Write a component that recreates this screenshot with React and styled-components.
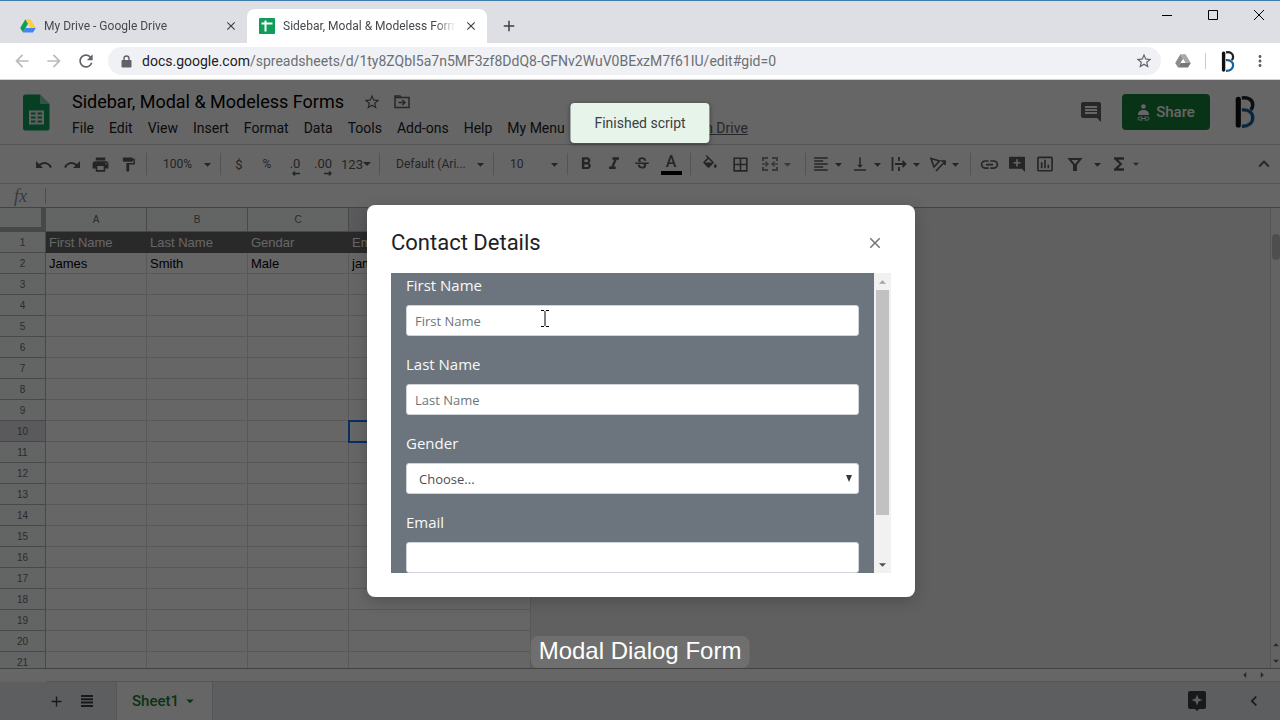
import React, { useState } from 'react'
import styled, { createGlobalStyle } from 'styled-components'
import {
  MdPrint,
  MdFormatPaint,
  MdFormatBold,
  MdFormatItalic,
  MdStrikethroughS,
  MdBorderAll,
  MdFormatAlignLeft,
  MdVerticalAlignBottom,
  MdInsertLink,
  MdFunctions,
  MdKeyboardArrowUp,
  MdKeyboardArrowLeft,
  MdArrowDropDown,
  MdArrowDropUp,
  MdArrowLeft,
  MdArrowRight,
  MdArrowBack,
  MdArrowForward,
  MdRefresh,
  MdStarBorder,
  MdMoreVert,
  MdAdd,
  MdClose,
  MdInsertChartOutlined,
} from 'react-icons/md'

const ui = "'Open Sans', 'Noto Sans', sans-serif"
const roboto = "Roboto, 'Liberation Sans', sans-serif"
const arial = "'Liberation Sans', Arial, sans-serif"

const GlobalStyle = createGlobalStyle`
  * {
    box-sizing: border-box;
  }
  body {
    margin: 0;
    overflow: hidden;
    font-family: ${roboto};
  }
  button, input, select {
    margin: 0;
    padding: 0;
    border: 0;
    background: none;
    font: inherit;
    color: inherit;
  }
  svg {
    display: block;
    flex-shrink: 0;
  }
`

const Browser = styled.div`
  display: flex;
  flex-direction: column;
  height: 100vh;
  background-color: white;
`

/* browser frame */
const TabStrip = styled.div`
  display: flex;
  height: 43px;
  border-top: 1px solid #3f7cab;
  background-color: #dddfe5;
  font-size: 12px;
  color: #45494d;
`
const Tab = styled.div`
  display: flex;
  align-items: center;
  gap: 8px;
  width: ${(props) => (props.$active ? '240px' : '247px')};
  margin-top: 8px;
  padding: 0 9px 0 ${(props) => (props.$active ? '12px' : '20px')};
  border-radius: 8px 8px 0 0;
  background-color: ${(props) => (props.$active ? 'white' : 'transparent')};
`
const TabTitle = styled.span`
  flex: 1;
  overflow: hidden;
  white-space: nowrap;
  mask-image: linear-gradient(to right, black 88%, transparent);
`
const IconButton = styled.button`
  display: flex;
  align-items: center;
  justify-content: center;
  width: ${(props) => props.$w || 28}px;
  height: 28px;
  color: ${(props) => props.$color || 'inherit'};
`
const TabClose = styled.button`
  display: flex;
  color: #3c4043;
`
const NewTab = styled(IconButton)`
  align-self: center;
  margin: 8px 0 0 8px;
`
const WindowButtons = styled.div`
  display: flex;
  margin: 0 -2px 0 auto;
`
const NavBar = styled.div`
  display: flex;
  align-items: center;
  height: 37px;
  padding: 0 2px 0 6px;
  border-bottom: 1px solid #d0d2d4;
  color: #5f6368;
`
const NavButtons = styled.div`
  display: flex;
  gap: 4px;
  margin: 0 8px 0 2px;
`
const Omnibox = styled.div`
  flex: 1;
  display: flex;
  align-items: center;
  gap: 9px;
  height: 28px;
  padding: 0 8px 0 12px;
  border-radius: 14px;
  background-color: #f0f1f4;
  font-size: 14px;
`
const Url = styled.span`
  flex: 1;
  white-space: nowrap;
  color: #6b6f74;
  b {
    font-weight: 400;
    color: #202124;
  }
`
const Extensions = styled.div`
  display: flex;
  align-items: center;
  margin-left: 8px;
`
const NavDivider = styled.i`
  width: 1px;
  height: 16px;
  margin: 0 8px;
  background-color: #c8cacd;
`

/* spreadsheet */
const Sheets = styled.main`
  flex: 1;
  display: flex;
  flex-direction: column;
  min-height: 0;
  position: relative;
  color: #202124;
`
const Header = styled.header`
  display: flex;
  align-items: center;
  height: 64px;
  padding: 0 24px 0 23px;
`
const HeaderText = styled.div`
  flex: 1;
  margin-left: 22px;
  padding-top: 5px;
`
const TitleRow = styled.div`
  display: flex;
  align-items: center;
  gap: 13px;
  height: 26px;
  color: #5f6368;
`
const DocTitle = styled.h1`
  margin: 0 6px 0 0;
  font-size: 18px;
  font-weight: 400;
  color: black;
`
const MenuRow = styled.nav`
  display: flex;
  align-items: center;
  gap: 15px;
  height: 26px;
  font-size: 14px;
  white-space: nowrap;
  a {
    margin-left: 6px;
    color: #5f6368;
  }
`
const ShareButton = styled.button`
  display: flex;
  align-items: center;
  justify-content: center;
  gap: 6px;
  width: 88px;
  height: 36px;
  margin: 0 24px 0 17px;
  border-radius: 4px;
  background-color: #188038;
  color: white;
  font-size: 15px;
  font-weight: 500;
`
const Toolbar = styled.div`
  display: flex;
  align-items: center;
  height: 40px;
  padding: 0 2px 0 30px;
  border-top: 1px solid #d0d2d5;
  border-bottom: 1px solid #d0d2d5;
  color: #5a5d61;
  font-size: 13px;
`
const Separator = styled.i`
  width: 1px;
  height: 22px;
  margin: 0 4px;
  background-color: #cfd1d4;
`
const Picker = styled.label`
  display: flex;
  align-items: center;
  width: ${(props) => props.$w}px;
  padding-left: 12px;
  font-size: 12px;
  select {
    flex: 1;
    min-width: 0;
    appearance: none;
  }
`
const MenuButton = styled.button`
  display: flex;
  align-items: center;
  justify-content: center;
  width: 39px;
  height: 28px;
`
const FilterButton = styled(MenuButton)`
  gap: 6px;
  width: 48px;
  padding-left: 6px;
`
const Decimal = styled.span`
  display: flex;
  flex-direction: column;
  align-items: flex-end;
  padding-top: 4px;
  font-size: 13px;
  line-height: 14px;
`
const Percent = styled.span`
  font-size: 12px;
`
const TextColor = styled.span`
  width: 21px;
  border-bottom: 4px solid black;
  font-size: 16px;
  line-height: 18px;
  font-weight: 500;
`
const Collapse = styled.div`
  margin-left: auto;
`
const FormulaBar = styled.label`
  display: flex;
  align-items: center;
  height: 23px;
  span {
    width: 46px;
    padding-left: 14px;
    border-right: 1px solid #c0c0c0;
    font-family: 'Liberation Serif', serif;
    font-style: italic;
    font-size: 18px;
    line-height: 16px;
    color: #8f9194;
  }
  input {
    flex: 1;
  }
`
const GridArea = styled.div`
  flex: 1;
  display: flex;
  min-height: 0;
  overflow: hidden;
  border-top: 1px solid #a8a8a8;
  border-bottom: 1px solid #a8a8a8;
  background-color: #efefef;
`
const Grid = styled.table`
  table-layout: fixed;
  width: 531px;
  border-collapse: separate;
  border-spacing: 0;
  font-family: ${arial};
  font-size: 13px;
`
const Corner = styled.th`
  width: 46px;
  height: 24px;
  border-right: 5px solid #b4b4b4;
  border-bottom: 5px solid #b4b4b4;
  background-color: #f8f9fa;
`
const ColumnHead = styled.th`
  width: ${(props) => props.$w}px;
  padding: 0;
  border-right: 1px solid #b4b4b4;
  border-bottom: 1px solid #b4b4b4;
  background-color: ${(props) => (props.$active ? '#e0e2e6' : '#f8f9fa')};
  color: #6a6d70;
  font-size: 10px;
  font-weight: 400;
`
const RowHead = styled(ColumnHead)`
  height: 21px;
`
const Cell = styled.td`
  height: 21px;
  padding: 0 3px;
  overflow: hidden;
  white-space: nowrap;
  border-right: 1px solid ${(props) => (props.$head ? '#666666' : '#dcdcdc')};
  border-bottom: 1px solid ${(props) => (props.$head ? '#666666' : '#dcdcdc')};
  background-color: ${(props) => (props.$head ? '#666666' : 'white')};
  color: ${(props) => (props.$head ? 'white' : 'black')};
  outline: ${(props) => (props.$active ? '2px solid #1a73e8' : 'none')};
  outline-offset: -1px;
`
const VerticalTrack = styled.div`
  display: flex;
  flex-direction: column;
  align-items: center;
  gap: 2px;
  width: 10px;
  margin-left: auto;
  padding: 26px 0 0 1px;
  border-left: 1px solid #d0d0d0;
  background-color: #f8f8f8;
  color: #666666;
`
const VerticalThumb = styled.i`
  width: 8px;
  height: 26px;
  margin-bottom: auto;
  border-radius: 4px;
  background-color: #c4c4c4;
`
const HorizontalTrack = styled.div`
  display: flex;
  align-items: center;
  justify-content: flex-end;
  gap: 3px;
  height: 13px;
  margin-left: 46px;
  padding-right: 11px;
  border-bottom: 1px solid #d8d8d8;
  color: #666666;
`
const Footer = styled.footer`
  display: flex;
  align-items: center;
  height: 38px;
  padding: 0 12px 0 42px;
  background-color: #e8eaee;
  color: #3c4043;
`
const SheetTab = styled.button`
  display: flex;
  align-items: center;
  justify-content: center;
  gap: 2px;
  align-self: stretch;
  width: 97px;
  margin: 0 auto 0 12px;
  padding-left: 2px;
  border: solid #d8d8d8;
  border-width: 0 1px;
  background-color: white;
  color: #188038;
  font-size: 15px;
  font-weight: 500;
`
const FooterTools = styled.div`
  display: flex;
  gap: 29px;
`

/* things above the sheet */
const Overlay = styled.div`
  position: absolute;
  inset: 0;
  display: flex;
  align-items: center;
  justify-content: center;
  padding: 2px 0 0 2px;
  background-color: rgba(0, 0, 0, 0.6);
`
const Toast = styled.div`
  position: absolute;
  top: 23px;
  left: 50%;
  transform: translateX(-50%);
  padding: 0 24px;
  border-radius: 4px;
  background-color: #e6f4ea;
  box-shadow: 0 1px 4px rgba(0, 0, 0, 0.4);
  color: #3c4043;
  font-size: 14px;
  line-height: 40px;
`
const Dialog = styled.section`
  width: 548px;
  padding: 24px;
  border-radius: 8px;
  background-color: white;
  box-shadow: 0 4px 16px rgba(0, 0, 0, 0.2);
`
const DialogHeader = styled.div`
  display: flex;
  align-items: center;
  justify-content: space-between;
  height: 28px;
  margin-bottom: 16px;
  padding-right: 7px;
  h2 {
    margin: 0;
    font-size: 22px;
    line-height: 26px;
    font-weight: 400;
    color: #202124;
  }
  button {
    color: #757575;
  }
`
const DialogBody = styled.div`
  display: flex;
  height: 300px;
`
const Form = styled.form`
  flex: 1;
  overflow: hidden;
  padding: 0 15px;
  background-color: #6c757d;
  font-family: ${ui};
`
const Group = styled.div`
  margin-bottom: 16px;
  label {
    display: block;
    margin-bottom: 8px;
    font-size: 15px;
    line-height: 24px;
    font-weight: 500;
    color: #f8f9fa;
  }
`
const TextInput = styled.input`
  display: block;
  width: 100%;
  height: 31px;
  padding: 0 8px;
  border: 1px solid #ced4da;
  border-radius: 3px;
  background-color: white;
  color: #495057;
  font-size: 13px;
  &::placeholder {
    color: #6c757d;
    opacity: 1;
  }
`
const SelectBox = styled.div`
  display: flex;
  align-items: center;
  height: 31px;
  padding-right: 5px;
  border: 1px solid #ced4da;
  border-radius: 3px;
  background-color: white;
  color: #495057;
  font-size: 13px;
  select {
    flex: 1;
    height: 29px;
    padding-left: 12px;
    appearance: none;
  }
`
const Scrollbar = styled.div`
  display: flex;
  flex-direction: column;
  align-items: center;
  width: 17px;
  background-color: #f1f1f1;
`
const ScrollArrow = styled.button`
  display: flex;
  align-items: center;
  justify-content: center;
  width: 17px;
  height: 17px;
  color: ${(props) => (props.$dim ? '#a3a3a3' : '#505050')};
`
const ScrollThumb = styled.i`
  width: 13px;
  height: 225px;
  margin-bottom: auto;
  background-color: #c1c1c1;
`
const Caption = styled.div`
  position: absolute;
  bottom: 52px;
  left: 50%;
  transform: translateX(-50%);
  height: 32px;
  padding: 0 8px;
  border-radius: 8px;
  background-color: #6f6f6f;
  color: white;
  font-family: ${arial};
  font-size: 24px;
  line-height: 29px;
  white-space: nowrap;
`
const Pointer = styled.svg`
  position: absolute;
  top: 230px;
  left: 541px;
`

const DriveIcon = ({ grey }) => (
  <svg width="16" height="16" viewBox="0 0 16 16">
    <path d="M5.4 1.2 0.2 10 3 14.6 8 5.8z" fill={grey ? '#8c8c8c' : '#0f9d58'} />
    <path d="M5.4 1.2h5.2L15.8 10h-5.2z" fill={grey ? '#a8a8a8' : '#ffcd40'} />
    <path d="M3 14.6 5.6 10h10.2L13 14.6z" fill={grey ? '#777777' : '#4285f4'} />
  </svg>
)

const SheetFavicon = () => (
  <svg width="16" height="16" viewBox="0 0 16 16">
    <rect width="16" height="16" rx="1" fill="#0f9d58" />
    <path d="M2.5 5.5h11M6.5 2.5v11" stroke="white" strokeWidth="2" />
  </svg>
)

const LockIcon = () => (
  <svg width="13" height="13" viewBox="0 0 13 13">
    <path d="M2.5 5h8a1 1 0 0 1 1 1v5.500a1 1 0 0 1-1 1h-8a1 1 0 0 1-1-1V6a1 1 0 0 1 1-1z" fill="currentColor" />
    <path d="M4 5.500V3.500a2.500 2.500 0 0 1 5 0v2" fill="none" stroke="currentColor" strokeWidth="1.400" />
  </svg>
)

const SheetsLogo = () => (
  <svg width="27" height="37" viewBox="0 0 27 37">
    <path d="M2.5 .5H17L26.5 10v24a2.5 2.5 0 0 1-2.5 2.5H2.5A2.5 2.5 0 0 1 0 34V3A2.5 2.5 0 0 1 2.5 .5z" fill="#0f9d58" />
    <path d="M17 .5 26.5 10H17z" fill="#87ceac" />
    <path d="M6 16.5h15v14H6zM8 18.5v2h4.5v-2zm6.5 0v2H19v-2zM8 22.5v2h4.5v-2zm6.5 0v2H19v-2zM8 26.5v2h4.5v-2zm6.5 0v2H19v-2z" fill="#f1f1f1" fillRule="evenodd" />
  </svg>
)

const BrandLogo = ({ width, height }) => (
  <svg width={width} height={height} viewBox="0 0 19 31" fill="none">
    <path d="M3 3.2v24.8" stroke="#111111" strokeWidth="5" strokeLinecap="round" />
    <path d="M6.5 2C13 1 17 4 17 8.5c0 2-.6 3.5-1.8 5" stroke="#222222" strokeWidth="3.4" />
    <path d="M6.5 13.5C13 13 17 16 17 21s-4 8.5-10.5 8.3" stroke="#14619e" strokeWidth="3.2" />
  </svg>
)

const CommentIcon = ({ plus, size }) => (
  <svg width={size} height={size} viewBox="0 0 20 20" fill="currentColor">
    <path
      fillRule="evenodd"
      d={
        plus
          ? 'M1 1h18a1 1 0 0 1 1 1v18l-4-4H1a1 1 0 0 1-1-1V2a1 1 0 0 1 1-1zM9 4v3.5H5.5v2H9V13h2V9.5h3.5v-2H11V4z'
          : 'M2 0h16a2 2 0 0 1 2 2v18l-4-4H2a2 2 0 0 1-2-2V2a2 2 0 0 1 2-2zM4 4v2h12V4zm0 3v2h12V7zm0 3v2h12v-2z'
      }
    />
  </svg>
)

const ShareIcon = () => (
  <svg width="13" height="17" viewBox="0 0 13 17" fill="currentColor">
    <circle cx="6.5" cy="2.5" r="2.3" />
    <path d="M1 11c0-3.5 2-5 5.5-5S12 7.5 12 11z" />
    <path d="M5.5 13H2.5a1.5 1.5 0 0 0 0 3h3M7.5 13h3a1.5 1.5 0 0 1 0 3h-3M4 14.5h5" fill="none" stroke="currentColor" />
  </svg>
)

const MoveIcon = () => (
  <svg width="16" height="14" viewBox="0 0 16 14" fill="none" stroke="currentColor" strokeWidth="1.5">
    <path d="M1 2.5h14v10H1z" />
    <path d="M1 2V1h5l1 1.5M4.5 7.5H11M8.5 5 11 7.500 8.500 10" />
  </svg>
)

const UndoIcon = ({ redo }) => (
  <svg width="16" height="9" viewBox="0 0 16 9" fill="none" stroke="currentColor" strokeWidth="2">
    <path d={redo ? 'M1 7.500C3 3 8.500 1 13 5.500' : 'M15 7.500C13 3 7.500 1 3 5.500'} />
    <path d={redo ? 'M16 1v7H9z' : 'M0 1v7h7z'} fill="currentColor" stroke="none" />
  </svg>
)

const FillIcon = () => (
  <svg width="18" height="18" viewBox="0 0 24 24" fill="currentColor">
    <path d="M16.56 8.94 7.62 0 6.21 1.41l2.38 2.38-5.15 5.15c-.59.59-.59 1.54 0 2.12l5.5 5.5c.29.29.68.44 1.06.44s.77-.15 1.06-.44l5.5-5.5c.59-.58.59-1.53 0-2.12zM5.21 10 10 5.21 14.79 10zM19 11.5s-2 2.17-2 3.5c0 1.1.9 2 2 2s2-.9 2-2c0-1.33-2-3.5-2-3.5z" />
  </svg>
)

const MergeIcon = () => (
  <svg width="18" height="18" viewBox="0 0 18 18" fill="none" stroke="currentColor" strokeWidth="2">
    <path d="M2 6V3h5M11 3h5v3M2 12v3h5M11 15h5v-3" />
    <path d="M1 9h5M17 9h-5M4.5 6.5 7 9l-2.5 2.5M13.5 6.5 11 9l2.5 2.5" strokeWidth="1.5" />
  </svg>
)

const WrapIcon = () => (
  <svg width="18" height="18" viewBox="0 0 18 18" fill="none" stroke="currentColor" strokeWidth="1.8">
    <path d="M2.5 2v14M9 2v4M9 12v4M5 9h10M12.5 6l3 3-3 3" />
  </svg>
)

const RotateIcon = () => (
  <svg width="18" height="18" viewBox="0 0 18 18" fill="none" stroke="currentColor" strokeWidth="1.7">
    <path d="M2 3.5 10.5 6 5 12zM7 16 16 6.5M12 6h4v4" />
  </svg>
)

const FilterIcon = () => (
  <svg width="16" height="16" viewBox="0 0 16 16" fill="none" stroke="currentColor" strokeWidth="2">
    <path d="M2.5 3h11L9 8.5V14H7V8.5z" />
  </svg>
)

const ExploreIcon = () => (
  <svg width="18" height="20" viewBox="0 0 18 20" fill="currentColor">
    <path fillRule="evenodd" d="M2 0h14a2 2 0 0 1 2 2v14a2 2 0 0 1-2 2h-5l-2 2-2-2H2a2 2 0 0 1-2-2V2a2 2 0 0 1 2-2zm7 3.5L7.5 7.5 3.5 9l4 1.5L9 14.5l1.5-4 4-1.5-4-1.5z" />
  </svg>
)

const ListIcon = () => (
  <svg width="12" height="12" viewBox="0 0 12 12" stroke="currentColor" strokeWidth="2">
    <path d="M0 1h12M0 4.3h12M0 7.6h12M0 11h12" />
  </svg>
)

const DecimalArrow = ({ right }) => (
  <svg width="8" height="5" viewBox="0 0 8 5" fill="none" stroke="currentColor" strokeWidth="1.5">
    <path d={right ? 'M0 2.5h7M5 .5l2 2-2 2' : 'M8 2.5H1M3 .5l-2 2 2 2'} />
  </svg>
)

const Triangle = ({ up, w = 8 }) => (
  <svg width={w} height="4" viewBox="0 0 8 4" fill="currentColor">
    <path d={up ? 'M0 4h8L4 0z' : 'M0 0h8L4 4z'} />
  </svg>
)

const menus = ['File', 'Edit', 'View', 'Insert', 'Format', 'Data', 'Tools', 'Add-ons', 'Help', 'My Menu']

const columns = [
  { name: 'A', width: 101 },
  { name: 'B', width: 101 },
  { name: 'C', width: 101 },
  { name: 'D', width: 182 },
]

const data = {
  1: ['First Name', 'Last Name', 'Gendar', 'Email'],
  2: ['James', 'Smith', 'Male', 'james@example.com'],
}

const rows = Array.from({ length: 21 }, (_, i) => i + 1)

const dropButtons = [
  { label: 'Horizontal align', icon: <MdFormatAlignLeft size={18} /> },
  { label: 'Vertical align', icon: <MdVerticalAlignBottom size={18} /> },
  { label: 'Text wrapping', icon: <WrapIcon /> },
  { label: 'Text rotation', icon: <RotateIcon /> },
]

function BrowserFrame() {
  return (
    <>
      <TabStrip>
        <Tab>
          <DriveIcon />
          <TabTitle>My Drive - Google Drive</TabTitle>
          <TabClose aria-label="Close tab">
            <MdClose size={14} />
          </TabClose>
        </Tab>
        <Tab $active>
          <SheetFavicon />
          <TabTitle>Sidebar, Modal &amp; Modeless Forms</TabTitle>
          <TabClose aria-label="Close tab">
            <MdClose size={14} />
          </TabClose>
        </Tab>
        <NewTab $color="#3c4043" aria-label="New tab">
          <MdAdd size={18} />
        </NewTab>
        <WindowButtons>
          <IconButton $w={46} $color="black" aria-label="Minimize">
            <svg width="10" height="10" stroke="currentColor">
              <path d="M0 5.5h10" />
            </svg>
          </IconButton>
          <IconButton $w={46} $color="black" aria-label="Maximize">
            <svg width="10" height="10" stroke="currentColor" fill="none">
              <path d="M.5 .5h9v9h-9z" />
            </svg>
          </IconButton>
          <IconButton $w={46} $color="black" aria-label="Close">
            <svg width="10" height="10" stroke="currentColor">
              <path d="M0 0l10 10M10 0 0 10" />
            </svg>
          </IconButton>
        </WindowButtons>
      </TabStrip>
      <NavBar>
        <NavButtons>
          <IconButton $color="#b9bbbe" aria-label="Back">
            <MdArrowBack size={20} />
          </IconButton>
          <IconButton $color="#b9bbbe" aria-label="Forward">
            <MdArrowForward size={20} />
          </IconButton>
          <IconButton aria-label="Reload">
            <MdRefresh size={20} />
          </IconButton>
        </NavButtons>
        <Omnibox>
          <LockIcon />
          <Url>
            <b>docs.google.com</b>
            /spreadsheets/d/1ty8ZQbI5a7n5MF3zf8DdQ8-GFNv2WuV0BExzM7f61IU/edit#gid=0
          </Url>
          <MdStarBorder size={18} />
        </Omnibox>
        <Extensions>
          <IconButton aria-label="Drive extension">
            <DriveIcon grey />
          </IconButton>
          <NavDivider />
          <IconButton aria-label="Profile">
            <BrandLogo width={14} height={21} />
          </IconButton>
          <IconButton $w={36} aria-label="Menu">
            <MdMoreVert size={18} />
          </IconButton>
        </Extensions>
      </NavBar>
    </>
  )
}

function SheetToolbar() {
  return (
    <Toolbar>
      <IconButton aria-label="Undo"><UndoIcon /></IconButton>
      <IconButton aria-label="Redo"><UndoIcon redo /></IconButton>
      <IconButton aria-label="Print"><MdPrint size={19} /></IconButton>
      <IconButton aria-label="Paint format"><MdFormatPaint size={17} /></IconButton>
      <Separator />
      <Picker $w={65}>
        <select aria-label="Zoom">
          <option>100%</option>
        </select>
        <MdArrowDropDown size={17} />
      </Picker>
      <Separator />
      <IconButton aria-label="Format as currency">$</IconButton>
      <IconButton aria-label="Format as percent"><Percent>%</Percent></IconButton>
      <IconButton aria-label="Decrease decimal places">
        <Decimal>.0<DecimalArrow /></Decimal>
      </IconButton>
      <IconButton aria-label="Increase decimal places">
        <Decimal>.00<DecimalArrow right /></Decimal>
      </IconButton>
      <IconButton $w={38} aria-label="More formats">
        123
        <Triangle />
      </IconButton>
      <Separator />
      <Picker $w={105}>
        <select aria-label="Font">
          <option>Default (Ari...</option>
        </select>
        <MdArrowDropDown size={17} />
      </Picker>
      <Separator />
      <Picker $w={65}>
        <select aria-label="Font size">
          <option>10</option>
        </select>
        <MdArrowDropDown size={17} />
      </Picker>
      <Separator />
      <IconButton aria-label="Bold"><MdFormatBold size={20} /></IconButton>
      <IconButton aria-label="Italic"><MdFormatItalic size={20} /></IconButton>
      <IconButton aria-label="Strikethrough"><MdStrikethroughS size={18} /></IconButton>
      <IconButton $w={30} aria-label="Text color"><TextColor>A</TextColor></IconButton>
      <Separator />
      <IconButton $w={30} aria-label="Fill color"><FillIcon /></IconButton>
      <IconButton $w={30} aria-label="Borders"><MdBorderAll size={19} /></IconButton>
      <IconButton $w={46} $color="#8d9093" aria-label="Merge cells">
        <MergeIcon />
        <MdArrowDropDown size={17} />
      </IconButton>
      <Separator />
      {dropButtons.map((item) => (
        <MenuButton key={item.label} aria-label={item.label}>
          {item.icon}
          <MdArrowDropDown size={17} />
        </MenuButton>
      ))}
      <Separator />
      <IconButton aria-label="Insert link"><MdInsertLink size={21} /></IconButton>
      <IconButton aria-label="Insert comment"><CommentIcon plus size={16} /></IconButton>
      <IconButton aria-label="Insert chart"><MdInsertChartOutlined size={20} /></IconButton>
      <FilterButton aria-label="Filter">
        <FilterIcon />
        <MdArrowDropDown size={17} />
      </FilterButton>
      <IconButton $w={38} aria-label="Functions">
        <MdFunctions size={20} />
        <MdArrowDropDown size={14} />
      </IconButton>
      <Collapse>
        <IconButton aria-label="Hide the menus"><MdKeyboardArrowUp size={22} /></IconButton>
      </Collapse>
    </Toolbar>
  )
}

function Spreadsheet() {
  return (
    <GridArea>
      <Grid>
        <thead>
          <tr>
            <Corner />
            {columns.map((col) => (
              <ColumnHead key={col.name} $w={col.width} $active={col.name === 'D'}>
                {col.name}
              </ColumnHead>
            ))}
          </tr>
        </thead>
        <tbody>
          {rows.map((row) => (
            <tr key={row}>
              <RowHead $active={row === 10}>{row}</RowHead>
              {columns.map((col, i) => (
                <Cell key={col.name} $head={row === 1} $active={row === 10 && i === 3}>
                  {data[row] ? data[row][i] : ''}
                </Cell>
              ))}
            </tr>
          ))}
        </tbody>
      </Grid>
      <VerticalTrack>
        <VerticalThumb />
        <MdArrowDropUp size={14} />
        <MdArrowDropDown size={14} />
      </VerticalTrack>
    </GridArea>
  )
}

function ContactDialog({ onClose }) {
  return (
    <Dialog role="dialog" aria-label="Contact Details">
      <DialogHeader>
        <h2>Contact Details</h2>
        <button aria-label="Close" onClick={onClose}>
          <MdClose size={18} />
        </button>
      </DialogHeader>
      <DialogBody>
        <Form>
          <Group>
            <label htmlFor="first">First Name</label>
            <TextInput id="first" placeholder="First Name" />
          </Group>
          <Group>
            <label htmlFor="last">Last Name</label>
            <TextInput id="last" placeholder="Last Name" />
          </Group>
          <Group>
            <label htmlFor="gender">Gender</label>
            <SelectBox>
              <select id="gender">
                <option>Choose...</option>
                <option>Male</option>
                <option>Female</option>
              </select>
              <svg width="8" height="8" viewBox="0 0 8 8" fill="#343a40">
                <path d="M1 0h6L4 7z" />
              </svg>
            </SelectBox>
          </Group>
          <Group>
            <label htmlFor="email">Email</label>
            <TextInput id="email" type="email" />
          </Group>
        </Form>
        <Scrollbar>
          <ScrollArrow type="button" $dim aria-label="Scroll up">
            <Triangle up w={7} />
          </ScrollArrow>
          <ScrollThumb />
          <ScrollArrow type="button" aria-label="Scroll down">
            <Triangle w={7} />
          </ScrollArrow>
        </Scrollbar>
      </DialogBody>
    </Dialog>
  )
}

function App() {
  const [open, setOpen] = useState(true)

  return (
    <Browser>
      <GlobalStyle />
      <BrowserFrame />
      <Sheets>
        <Header>
          <SheetsLogo />
          <HeaderText>
            <TitleRow>
              <DocTitle>Sidebar, Modal &amp; Modeless Forms</DocTitle>
              <MdStarBorder size={18} />
              <MoveIcon />
            </TitleRow>
            <MenuRow>
              {menus.map((name) => (
                <button key={name}>{name}</button>
              ))}
              <a href="#saved">All changes saved in Drive</a>
            </MenuRow>
          </HeaderText>
          <IconButton $color="#5f6368" aria-label="Comments">
            <CommentIcon size={20} />
          </IconButton>
          <ShareButton>
            <ShareIcon />
            Share
          </ShareButton>
          <BrandLogo width={22} height={32} />
        </Header>
        <SheetToolbar />
        <FormulaBar>
          <span>fx</span>
          <input aria-label="Formula" />
        </FormulaBar>
        <Spreadsheet />
        <HorizontalTrack>
          <MdArrowLeft size={14} />
          <MdArrowRight size={14} />
        </HorizontalTrack>
        <Footer>
          <IconButton aria-label="Add sheet"><MdAdd size={17} /></IconButton>
          <IconButton $w={34} aria-label="All sheets"><ListIcon /></IconButton>
          <SheetTab>
            Sheet1
            <MdArrowDropDown size={18} />
          </SheetTab>
          <FooterTools>
            <IconButton aria-label="Explore"><ExploreIcon /></IconButton>
            <IconButton aria-label="Show side panel"><MdKeyboardArrowLeft size={20} /></IconButton>
          </FooterTools>
        </Footer>
        {open && (
          <Overlay>
            <ContactDialog onClose={() => setOpen(false)} />
          </Overlay>
        )}
        <Toast>Finished script</Toast>
        <Caption>Modal Dialog Form</Caption>
        <Pointer width="8" height="17" viewBox="0 0 8 17" fill="none" stroke="black">
          <path d="M0 .5h3M5 .5h3M0 16.5h3M5 16.5h3M4 1v15" />
        </Pointer>
      </Sheets>
    </Browser>
  )
}

export default App
